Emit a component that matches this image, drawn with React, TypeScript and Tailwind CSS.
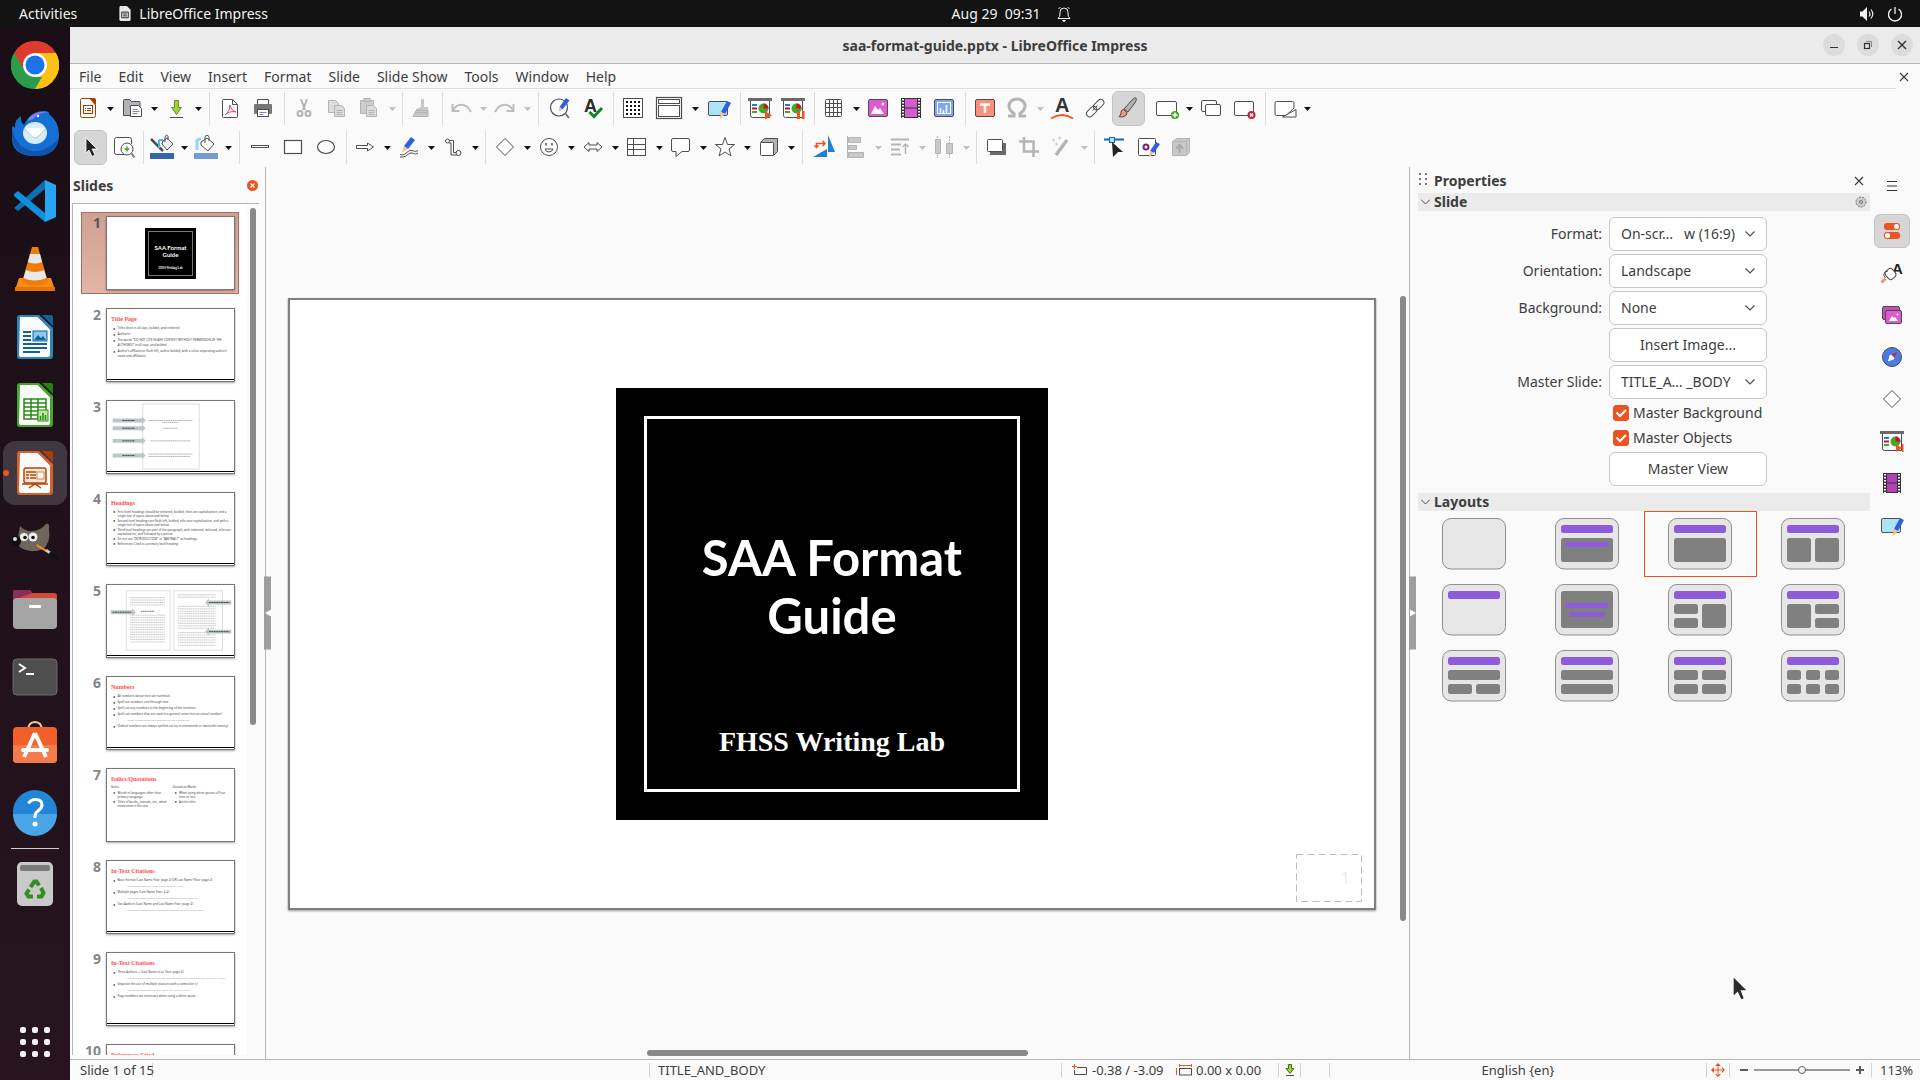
import React, { ReactNode, useState } from "react";

/* ------------------------------------------------------------------ */
/* Shared pieces                                                       */
/* ------------------------------------------------------------------ */

const Svg = ({ children, size = "size-6", box = "0 0 24 24" }: { children: ReactNode; size?: string; box?: string }) => (
  <svg className={`${size} shrink-0 overflow-visible`} viewBox={box} fill="none" stroke="#4d4d4d" strokeWidth="1" aria-hidden="true">
    {children}
  </svg>
);

const Pencil = () => (
  <g stroke="none">
    <path d="M20 5l4 2-6 11-4-2z" fill="#2f5fde" />
    <path d="M14 16l4 2-4.500 4.500-1 .5z" fill="#f7c08a" />
  </g>
);

const Screen = ({ children }: { children: ReactNode }) => (
  <Svg>
    <path d="M2.500 4v15.500q0 2 2 2H21.500V4" fill="#fff" />
    <rect x="0" y="2" width="24" height="3" fill="#6a6a6a" stroke="none" />
    <g stroke="none">
      <rect x="4" y="8" width="5" height="2" fill="#1e7fd6" />
      <rect x="4" y="11.500" width="5" height="2" fill="#c8102e" />
      <rect x="4" y="15" width="5" height="2" fill="#43a828" />
      <circle cx="15.500" cy="12.500" r="5" fill="#43a828" />
      <path d="M15.500 12.500V7.500a5 5 0 0 1 5 5z" fill="#c8102e" />
      {children}
    </g>
  </Svg>
);

const G = "#c9c9c9";
const GS = "#b4b4b4";

const ic = {
  newDoc: (
    <Svg>
      <path d="M5.500 2.500h9l5 5v12q0 2-2 2h-11q-2 0-2-2v-15q0-2 1-2z" fill="#fff" stroke="#a33e03" />
      <path d="M13 2h5q2 0 2 2v6z" fill="#a33e03" stroke="none" />
      <rect x="7.500" y="9.500" width="9" height="8" stroke="#a33e03" />
      <path d="M9 12.500h1m1 0h4M9 14.500h1m1 0h4" stroke="#a33e03" />
    </Svg>
  ),
  open: (
    <Svg>
      <path d="M3.500 19.500v-15q0-1 1-1h5l2 2h7.500q1 0 1 1v13z" fill="#b3b3b3" />
      <path d="M10.500 9.500h8l3 3v8h-11z" fill="#fff" />
      <path d="M12.500 13.500h5m-5 2h7m-7 2h5" stroke="#7b7be0" />
    </Svg>
  ),
  save: (
    <Svg>
      <path d="M10.500 4.500h4v7h3l-5 7-5-7h3z" fill="#9bd237" stroke="#6b8f2b" />
      <path d="M6 21.500h13" />
    </Svg>
  ),
  pdf: (
    <Svg>
      <path d="M5.500 3.500h9l5 5v12q0 1-1 1h-13q-1 0-1-1v-16q0-1 1-1z" fill="#fff" />
      <path d="M14.500 3.500v5h5" />
      <path d="M12 9c1 4 3 6 6 7-4-1-8 0-11 3 3-2 5-6 5-10z" stroke="#ed3d55" />
    </Svg>
  ),
  print: (
    <Svg>
      <path d="M6.500 8V3.500h11V8" fill="#fff" />
      <rect x="3" y="8" width="18" height="10" rx="1" fill="#777" stroke="none" />
      <rect x="6.500" y="13.500" width="11" height="7" fill="#fff" />
      <path d="M8.500 16.500h7m-7 2h4" stroke="#7b7be0" />
    </Svg>
  ),
  cut: (
    <Svg>
      <path d="M9 3l4 11M15 3l-4 11" stroke={GS} strokeWidth="2" />
      <circle cx="8" cy="17.500" r="2.500" stroke={GS} strokeWidth="2" />
      <circle cx="16" cy="17.500" r="2.500" stroke={GS} strokeWidth="2" />
    </Svg>
  ),
  copy: (
    <Svg>
      <path d="M3.500 4.500h7l3 3v9h-10z" fill="#dcdcdc" stroke={GS} />
      <path d="M9.500 9.500h7l3 3v8h-10z" fill="#dcdcdc" stroke={GS} />
      <path d="M11.500 14.500h6m-6 2h6m-6 2h6" stroke={GS} />
    </Svg>
  ),
  paste: (
    <Svg>
      <path d="M2.500 4.500h13v13h-13z" fill="#cecece" stroke={GS} />
      <rect x="6" y="2.500" width="6" height="3" fill={G} stroke={GS} />
      <path d="M8.500 9.500h7l3 3v8h-10z" fill="#dcdcdc" stroke={GS} />
      <path d="M10.500 14.500h6m-6 2h6m-6 2h6" stroke={GS} />
    </Svg>
  ),
  clone: (
    <Svg>
      <path d="M11 3h3v8h4v5H6v-3l5-2z" fill={G} stroke="none" />
      <path d="M6 14.500h12v6H3z" fill={G} stroke={GS} />
      <path d="M5 16.500h13" stroke={GS} />
    </Svg>
  ),
  undo: (
    <Svg>
      <path d="M3.500 8v7h7M3.500 14.500C8 7 17 6 22 16" stroke="#bdbdbd" strokeWidth="2" />
    </Svg>
  ),
  redo: (
    <Svg>
      <path d="M20.500 8v7h-7M20.500 14.500C16 7 7 6 2 16" stroke="#bdbdbd" strokeWidth="2" />
    </Svg>
  ),
  find: (
    <Svg>
      <circle cx="12" cy="11.500" r="8.500" fill="#fff" strokeWidth="1.200" />
      <path d="M18 17l4 5" stroke="#777" strokeWidth="2" />
      <path d="M19 2l3.500 2.500-7 9-3-2.500z" fill="#2f5fde" stroke="none" />
      <path d="M12.500 11l3 2.500-4 2z" fill="#f7c08a" stroke="none" />
    </Svg>
  ),
  spell: (
    <Svg>
      <text x="4" y="16" fontSize="18" fontWeight="700" fontFamily="Liberation Sans, sans-serif" fill="#2b2b2b" stroke="none">A</text>
      <path d="M9.500 16l4.500 4.500 8-8.500" stroke="#17822c" strokeWidth="3" />
    </Svg>
  ),
  grid: (
    <Svg>
      <rect x="2.500" y="2.500" width="19" height="19" fill="#fff" />
      {[6, 10, 14, 18].map((y) => (
        <path key={y} d={`M5 ${y}h14`} stroke="#111" strokeWidth="2" strokeDasharray="2 2" />
      ))}
    </Svg>
  ),
  views: (
    <Svg size="h-6 w-[26px]" box="0 0 26 24">
      <rect x=".5" y="1.500" width="25" height="21" fill="#fff" strokeWidth="1.200" />
      <rect x="2.500" y="3.500" width="21" height="4" fill="#fff" />
      <rect x="2.500" y="9.500" width="21" height="11" fill="#fff" />
    </Svg>
  ),
  master: (
    <Svg>
      <rect x="1.500" y="5.500" width="19" height="14" rx="1.500" fill="#aee3f7" />
      <Pencil />
    </Svg>
  ),
  startFirst: <Screen><path d="M17 15l7 4.500-7 4z" fill="#f0541e" /></Screen>,
  startCurrent: <Screen><path d="M16 15h3v8h-3zM21 15h2.500v8H21z" fill="#f0541e" /></Screen>,
  startNext: <Screen><path d="M16 15l6 4-6 4zM22 15h1.500v8H22z" fill="#f0541e" /></Screen>,
  table: (
    <Svg>
      <rect x="3.500" y="3.500" width="16" height="17" rx="1" fill="#fff" />
      <path d="M4 7.500h15M4 11.500h15M4 16.500h15M7.500 4v16M11.500 4v16M15.500 4v16" />
    </Svg>
  ),
  image: (
    <Svg>
      <rect x="2.500" y="3.500" width="19" height="17" rx="1.500" fill="#dd5bcf" />
      <path d="M5 18l4-8 3 4 2-2 4 6z" fill="#fff" stroke="none" />
      <circle cx="17" cy="8" r="1.500" fill="#fff" stroke="none" />
    </Svg>
  ),
  film: (
    <Svg>
      <rect x="2" y="2" width="20" height="20" fill="#333" stroke="none" />
      <rect x="6" y="3" width="12" height="8.500" fill="#d55bd0" stroke="none" />
      <rect x="6" y="12.500" width="12" height="8.500" fill="#d55bd0" stroke="none" />
      <path d="M4 3v19M20 3v19" stroke="#fff" strokeWidth="2" strokeDasharray="1.500 1.500" />
    </Svg>
  ),
  filmDark: (
    <Svg>
      <rect x="3" y="2" width="18" height="20" fill="#333" stroke="none" />
      <rect x="7" y="3" width="10" height="8.500" fill="#b441b3" stroke="none" />
      <rect x="7" y="12.500" width="10" height="8.500" fill="#b441b3" stroke="none" />
      <path d="M5 3v19M19 3v19" stroke="#fff" strokeWidth="2" strokeDasharray="1.500 1.500" />
    </Svg>
  ),
  chart: (
    <Svg>
      <rect x="2.500" y="3.500" width="19" height="17" rx="1.500" fill="#7ea6f5" />
      <rect x="5.500" y="6.500" width="13" height="11" stroke="#fff" />
      <path d="M8.500 17v-5M11.500 17v-3M14.500 17V9" stroke="#fff" strokeWidth="1.500" />
    </Svg>
  ),
  textbox: (
    <Svg>
      <rect x="2.500" y="3.500" width="19" height="17" rx="1.500" fill="#fb8f7c" />
      <path d="M7 8.500h10M12 8v9" stroke="#fff" strokeWidth="2.500" />
    </Svg>
  ),
  omega: (
    <Svg>
      <path d="M2 20h6v-2.500C5 15.500 3 13 3 10c0-4 3.500-7 8-7s8 3 8 7c0 3-2 5.500-5 7.500V20h6" stroke={GS} strokeWidth="3" />
    </Svg>
  ),
  fontwork: (
    <Svg>
      <text x="5" y="16" fontSize="20" fontWeight="700" fontFamily="Liberation Sans, sans-serif" fill="#333" stroke="none">A</text>
      <path d="M1 22.500q11-7 22 0" stroke="#f0541e" strokeWidth="2" />
    </Svg>
  ),
  link: (
    <Svg>
      <rect x="9.500" y="5.500" width="12" height="6.500" rx="3.200" transform="rotate(-45 15.500 8.500)" />
      <rect x="2.500" y="12.500" width="12" height="6.500" rx="3.200" transform="rotate(-45 8.500 15.500)" />
      <path d="M9.500 14.500l5-5" />
    </Svg>
  ),
  brush: (
    <Svg>
      <path d="M20 2q1 1-.5 4L12 16l-4-3 8-9q3-3 4-2z" fill="#b3b3b3" />
      <path d="M7.500 13.500l3.500 3q0 3-3 4-2 1-5 0 2-1 2-4t2.500-3z" fill="#fb8f7c" />
    </Svg>
  ),
  newSlide: (
    <Svg>
      <rect x="1.500" y="5.500" width="20" height="14" rx="1.500" fill="#fff" />
      <circle cx="20" cy="19" r="4" fill="#43a828" stroke="none" />
      <path d="M17.500 19h5M20 16.500v5" stroke="#fff" strokeWidth="1.500" />
    </Svg>
  ),
  dupSlide: (
    <Svg>
      <rect x="2.500" y="4.500" width="15" height="11" rx="1.500" fill="#fff" />
      <rect x="6.500" y="8.500" width="15" height="11" rx="1.500" fill="#fff" />
    </Svg>
  ),
  delSlide: (
    <Svg>
      <rect x="2.500" y="5.500" width="19" height="14" rx="1.500" fill="#fff" />
      <circle cx="19.500" cy="19" r="4" fill="#c8243c" stroke="none" />
      <path d="M18 17.500l3 3m0-3l-3 3" stroke="#fff" strokeWidth="1.500" />
    </Svg>
  ),
  layout: (
    <Svg>
      <path d="M3.500 5.500h16q1.500 0 1.500 1.500v5l-8 7.500H3.500q-1.500 0-1.500-1.500V7q0-1.500 1.500-1.500z" fill="#fff" />
      <path d="M23 13.500v7.500H9.500z" fill="#fff" />
    </Svg>
  ),
  pointer: (
    <Svg>
      <path d="M8 3l11 11h-5l3 6-3 1.500-3-6.500-3 3z" fill="#222" stroke="#fff" strokeWidth=".8" />
    </Svg>
  ),
  zoom: (
    <Svg>
      <path d="M16 19.500H5.500q-2 0-2-2v-13q0-2 2-2h13q2 0 2 2V9" fill="#fff" />
      <circle cx="16" cy="14" r="6" fill="#fff" />
      <path d="M13.500 14h5M16 11.500v5" stroke="#43a828" strokeWidth="1.500" />
      <path d="M20.500 18.500l3 4" stroke="#777" strokeWidth="2" />
    </Svg>
  ),
  lineColor: (
    <Svg>
      <path d="M1 4l12 12" strokeWidth="2.500" />
      <path d="M9 5v8M9 5h4" stroke="#58b5d8" strokeWidth="2" />
      <path d="M13 6l4-3 6 6-6 6-5-6zM15 7V1.500q2-3 3 0V5" fill="#eee" />
      <rect x="0" y="18" width="24" height="6" fill="#3465a4" stroke="none" />
    </Svg>
  ),
  fillColor: (
    <Svg>
      <path d="M3 15V6q0-2 4-2" stroke="#8ed8f5" strokeWidth="3" />
      <path d="M7 7l6-4 7 6-6 7-7-6zM11 8V1.500q2-3 4 0V6" fill="#fff" />
      <rect x="0" y="18" width="24" height="6" fill="#729fcf" stroke="none" />
    </Svg>
  ),
  line: <Svg><rect x="3.500" y="10.500" width="17" height="2" fill="#fff" /></Svg>,
  rect: <Svg><rect x="3.500" y="5.500" width="17" height="13" fill="#fff" strokeWidth="1.200" /></Svg>,
  ellipse: <Svg><ellipse cx="12" cy="12" rx="8.500" ry="6.500" fill="#fff" strokeWidth="1.200" /></Svg>,
  arrow: <Svg><path d="M3.500 10.500h11v-2.500l6 4-6 4v-2.500h-11z" fill="#fff" /></Svg>,
  curve: (
    <Svg>
      <path d="M14 2l4 3-7 9-4-3z" fill="#2f5fde" stroke="none" />
      <path d="M7 11l4 3-6 3z" fill="#f7c08a" stroke="none" />
      <path d="M3 19.500c5 2 7-4 11-4 3 0 4 2 7 0M3 22c6 1 8-4 11-4 3 0 4 2 7 0" />
    </Svg>
  ),
  connector: (
    <Svg>
      <path d="M8 5.500h4.500v12H16M8 8h2v12h6" />
      <circle cx="6.500" cy="6" r="2" fill="#fff" />
      <circle cx="17.500" cy="18" r="2.500" fill="#fff" />
    </Svg>
  ),
  diamond: <Svg><path d="M12 3.500l8.500 8.500-8.500 8.500-8.500-8.500z" fill="#fff" /></Svg>,
  smiley: (
    <Svg>
      <circle cx="12" cy="12" r="8.500" fill="#fff" />
      <path d="M9 8v2.500M15 8v2.500" strokeWidth="1.500" />
      <path d="M8 14h8q-1 3-4 3t-4-3z" />
    </Svg>
  ),
  blockArrow: <Svg><path d="M3 12l5-4.500v2.500h8V7.500l5 4.500-5 4.500V14H8v2.500z" fill="#fff" /></Svg>,
  flow: (
    <Svg>
      <rect x="2.500" y="3.500" width="18" height="17" fill="#fff" />
      <path d="M2.500 9.500h18M2.500 14.500h18M8.500 3.500v17" />
    </Svg>
  ),
  callout: <Svg><path d="M4 3.500h15q1.500 0 1.500 1.500v10q0 1.500-1.500 1.500h-6l-6 5v-5H4q-1.500 0-1.500-1.500V5q0-1.500 1.500-1.500z" fill="#fff" /></Svg>,
  star: <Svg><path d="M12 2.500l2.500 7h7l-5.500 4.500 2 7-6-4-6 4 2-7-5.500-4.500h7z" fill="#fff" /></Svg>,
  cube: (
    <Svg>
      <path d="M3.500 7.500l4-4h13v13l-4 4z" fill="#b3b3b3" />
      <rect x="3.500" y="7.500" width="13" height="13" rx="1" fill="#fff" />
    </Svg>
  ),
  rotate: (
    <Svg>
      <path d="M17 0v17h7zM2 22h14v-8z" fill="#1e7fd6" stroke="none" />
      <path d="M5.500 12V8.500h8M3.500 10.500l2 2 2-2M11.500 6l2.500 2.500-2.500 2.500" stroke="#f0541e" strokeWidth="1.500" />
    </Svg>
  ),
  align: (
    <Svg>
      <path d="M3.500 1v22" stroke={GS} />
      <g fill={G} stroke={GS}><path d="M4.500 2.500h12v5h-12zM4.500 10.500h8v4h-8zM4.500 17.500h15v5h-15z" /></g>
    </Svg>
  ),
  arrange: (
    <Svg>
      <path d="M3 4.500h18M3 9.500h10M3 14.500h9M3 19.500h10" stroke={GS} strokeWidth="2" />
      <path d="M17.500 19V9M14.500 12l3-3 3 3" stroke={GS} strokeWidth="1.500" />
    </Svg>
  ),
  distribute: (
    <Svg>
      <path d="M5.500 1v22M17.500 1v22" stroke={GS} strokeDasharray="2 1" />
      <path d="M3.500 4.500h5v14h-5zM14.500 8.500h6v10h-6z" fill={G} stroke={GS} />
    </Svg>
  ),
  shadow: (
    <Svg>
      <rect x="6" y="8" width="16" height="12" fill="#6a6a6a" stroke="none" />
      <rect x="3.500" y="4.500" width="15" height="12" rx="1" fill="#fff" />
    </Svg>
  ),
  crop: <Svg><path d="M7 2v14.500h15M2 6.500h14.500V22" stroke={GS} strokeWidth="2.500" /></Svg>,
  wand: (
    <Svg>
      <path d="M17 5L6 20" stroke={GS} strokeWidth="3.500" />
      <path d="M2 5h3M3.500 3.500v3M8 3h3M9.500 1.500v3M5 9h3M6.500 7.500v3" stroke={G} />
    </Svg>
  ),
  points: (
    <Svg>
      <path d="M2 4.500h20" stroke="#1566a8" strokeWidth="2" />
      <rect x="7.500" y="2.500" width="5" height="5" fill="#aee3f7" stroke="#1566a8" />
      <path d="M10 7l11 10h-5l-5 5z" fill="#222" stroke="none" />
    </Svg>
  ),
  glue: (
    <Svg>
      <rect x="3.500" y="3.500" width="17" height="17" rx="1" fill="#fff" />
      <circle cx="11" cy="12" r="2.500" stroke="#7b2276" strokeWidth="2" />
      <path d="M21 7l4 2-6 9-4-2z" fill="#2f5fde" stroke="none" />
      <path d="M15 16l4 2-5 4z" fill="#f7c08a" stroke="none" />
    </Svg>
  ),
  extrude: (
    <Svg>
      <path d="M4.500 6.500l4-3h13v14l-3 3h-14z" fill={G} stroke={GS} />
      <path d="M4.500 6.500h14v14M18.500 6.500l3-3" stroke={GS} />
      <path d="M11.500 18v-7M8 13.500l3.500-3.500 3.500 3.500" stroke="#a9a9a9" strokeWidth="2" />
    </Svg>
  ),
  menu: <Svg><path d="M7 7.500h10M7 12h10M7 16.500h10" stroke="#333" strokeWidth="1.200" /></Svg>,
  props: (
    <Svg>
      <g stroke="none">
        <rect x="4" y="4" width="16" height="7" rx="3" fill="#e95420" />
        <rect x="4" y="13" width="16" height="7" rx="3" fill="#e95420" />
        <circle cx="16.500" cy="7.500" r="2.500" fill="#fff" />
        <circle cx="7.500" cy="16.500" r="2.500" fill="#fff" />
      </g>
    </Svg>
  ),
  styles: (
    <Svg>
      <text x="12" y="13" fontSize="15" fontWeight="700" fontFamily="Liberation Sans, sans-serif" fill="#222" stroke="none">A</text>
      <rect x="6" y="8" width="9" height="10" rx="3" fill="#fff" transform="rotate(-40 10.500 13)" />
      <path d="M8 10q-5 1-4 5l1.500 2" />
      <path d="M1.500 21.500l4-4" stroke="#fb8f7c" strokeWidth="3" />
    </Svg>
  ),
  gallery: (
    <Svg>
      <rect x="2.500" y="3.500" width="17" height="13" rx="1.500" fill="#c84dbd" />
      <rect x="5.500" y="7.500" width="16" height="13" rx="1.500" fill="#dd5bcf" />
      <path d="M9 18l3-5 2 2 1-1 3 4z" fill="#fff" stroke="none" />
      <circle cx="17.500" cy="11.500" r="1" fill="#fff" stroke="none" />
    </Svg>
  ),
  compass: (
    <Svg>
      <circle cx="12" cy="12" r="9.500" fill="#4a7ce8" />
      <path d="M8 16.500l1.500-6 1.500-1 3.500 3.500-1 1.500z" fill="#fff" stroke="none" />
      <path d="M17 7l-5.500 2.500 3 3z" fill="#d8263c" stroke="none" />
    </Svg>
  ),
};

/* ------------------------------------------------------------------ */
/* Toolbars                                                            */
/* ------------------------------------------------------------------ */

type Tool = { label: string; icon: ReactNode; menu?: "on" | "off" | "wide"; pressed?: boolean; roomy?: boolean } | { gap: "s" | "m" | "l"; blank?: boolean };

const row1: Tool[] = [
  { label: "New", icon: ic.newDoc, menu: "on" },
  { label: "Open", icon: ic.open, menu: "on" },
  { label: "Save", icon: ic.save, menu: "on" },
  { gap: "l" },
  { label: "Export as PDF", icon: ic.pdf },
  { label: "Print", icon: ic.print },
  { gap: "m" },
  { label: "Cut", icon: ic.cut },
  { label: "Copy", icon: ic.copy },
  { label: "Paste", icon: ic.paste, menu: "off" },
  { gap: "m" },
  { label: "Clone Formatting", icon: ic.clone },
  { gap: "s" },
  { label: "Undo", icon: ic.undo, menu: "off" },
  { label: "Redo", icon: ic.redo, menu: "off" },
  { gap: "l" },
  { label: "Find and Replace", icon: ic.find },
  { label: "Spelling", icon: ic.spell },
  { gap: "m" },
  { label: "Display Grid", icon: ic.grid },
  { label: "Display Views", icon: ic.views, menu: "wide", roomy: true },
  { label: "Master Slide", icon: ic.master },
  { gap: "m" },
  { label: "Start from First Slide", icon: ic.startFirst },
  { label: "Start from Current Slide", icon: ic.startCurrent },
  { gap: "m" },
  { label: "Table", icon: ic.table, menu: "on" },
  { label: "Insert Image", icon: ic.image },
  { label: "Insert Media", icon: ic.film },
  { label: "Insert Chart", icon: ic.chart },
  { gap: "m" },
  { label: "Insert Text Box", icon: ic.textbox },
  { label: "Special Character", icon: ic.omega, menu: "off" },
  { label: "Fontwork", icon: ic.fontwork },
  { label: "Hyperlink", icon: ic.link },
  { label: "Show Draw Functions", icon: ic.brush, pressed: true },
  { gap: "s", blank: true },
  { label: "New Slide", icon: ic.newSlide, menu: "on" },
  { label: "Duplicate Slide", icon: ic.dupSlide },
  { label: "Delete Slide", icon: ic.delSlide },
  { gap: "m" },
  { label: "Slide Layout", icon: ic.layout, menu: "on" },
];

const row2: Tool[] = [
  { label: "Select", icon: ic.pointer, pressed: true },
  { label: "Zoom & Pan", icon: ic.zoom },
  { gap: "s" },
  { label: "Line Color", icon: ic.lineColor, menu: "on" },
  { label: "Fill Color", icon: ic.fillColor, menu: "on" },
  { gap: "l" },
  { label: "Line", icon: ic.line },
  { label: "Rectangle", icon: ic.rect },
  { label: "Ellipse", icon: ic.ellipse },
  { gap: "s" },
  { label: "Lines and Arrows", icon: ic.arrow, menu: "on" },
  { label: "Curves and Polygons", icon: ic.curve, menu: "on" },
  { label: "Connectors", icon: ic.connector, menu: "on" },
  { gap: "m" },
  { label: "Basic Shapes", icon: ic.diamond, menu: "on" },
  { label: "Symbol Shapes", icon: ic.smiley, menu: "on" },
  { label: "Block Arrows", icon: ic.blockArrow, menu: "on" },
  { label: "Flowchart", icon: ic.flow, menu: "on" },
  { label: "Callouts", icon: ic.callout, menu: "on" },
  { label: "Stars and Banners", icon: ic.star, menu: "on" },
  { label: "3D Objects", icon: ic.cube, menu: "on" },
  { gap: "l" },
  { label: "Rotate", icon: ic.rotate },
  { label: "Align Objects", icon: ic.align, menu: "off" },
  { label: "Arrange", icon: ic.arrange, menu: "off" },
  { label: "Distribute", icon: ic.distribute, menu: "off" },
  { gap: "m" },
  { label: "Shadow", icon: ic.shadow },
  { label: "Crop Image", icon: ic.crop },
  { label: "Filter", icon: ic.wand, menu: "off" },
  { gap: "m" },
  { label: "Edit Points", icon: ic.points },
  { label: "Show Gluepoints", icon: ic.glue },
  { label: "Toggle Extrusion", icon: ic.extrude },
];

const gapWidth = { s: "w-1.5", m: "w-2", l: "w-2.5" };

const Toolbar = ({ tools, name, pad }: { tools: Tool[]; name: string; pad: string }) => (
  <div role="toolbar" aria-label={name} className={`flex h-[39px] items-center ${pad}`}>
    {tools.map((t, n) =>
      "gap" in t ? (
        <span key={n} className={`flex h-[33px] shrink-0 justify-center ${gapWidth[t.gap]}`}>
          {!t.blank && <span className="w-px bg-[#dcdcdc]" />}
        </span>
      ) : (
        <React.Fragment key={n}>
          <button
            aria-label={t.label}
            className={`flex h-[35px] shrink-0 items-center justify-center rounded-md border pb-px ${t.roomy ? "w-[38px]" : "w-[33px] pr-px"} ${t.pressed ? "border-[#c4c4c4] bg-[#d6d6d6]" : "border-transparent"}`}
          >
            {t.icon}
          </button>
          {t.menu && (
            <button aria-label={`${t.label} options`} className={`flex h-[35px] shrink-0 items-center justify-center pt-px ${t.menu === "wide" ? "w-[15px]" : "w-[11px]"}`}>
              <svg className={`h-1 w-[7px] ${t.menu === "off" ? "fill-[#c0c0c0]" : "fill-[#111]"}`} viewBox="0 0 7 4" aria-hidden="true">
                <path d="M0 0h7L3.500 4z" />
              </svg>
            </button>
          )}
        </React.Fragment>
      ),
    )}
  </div>
);

/* ------------------------------------------------------------------ */
/* Desktop: top bar and dock                                           */
/* ------------------------------------------------------------------ */

const TopBar = () => (
  <header className="grid h-[27px] grid-cols-[1fr_auto_1fr] items-center bg-[#131313] text-[14px] leading-5 text-[#f2f2f2]">
    <div className="flex items-center pl-[19px]">
      <button>Activities</button>
      <button className="ml-[41px] flex items-center gap-[7px]">
        <svg className="h-[15px] w-3.5" viewBox="0 0 14 16" aria-hidden="true">
          <path d="M2 0h7l4 4v10q0 2-2 2H3q-2 0-2-2V2q0-2 1-2z" fill="#e6e6e6" />
          <path d="M3.500 6.500h7v6h-7zM5 8.500h4M5 10.500h4" fill="none" stroke="#222" />
        </svg>
        LibreOffice Impress
      </button>
    </div>
    <button className="flex items-center gap-4 pl-[104px]">
      <span className="whitespace-pre">Aug 29  09:31</span>
      <svg className="h-4 w-4" viewBox="0 0 16 16" fill="none" stroke="#f2f2f2" aria-hidden="true">
        <path d="M2 12.500q2-1.500 2-4.500V6q0-4 4-4t4 4v2q0 3 2 4.500zM2.500 3l2-2M13.500 3l-2-2" />
        <path d="M6.500 14.500h3L8 15.500z" fill="#f2f2f2" />
      </svg>
    </button>
    <button aria-label="System menu" className="flex items-center gap-3 justify-self-end pr-[17px]">
      <svg className="h-4 w-4" viewBox="0 0 16 16" fill="none" stroke="#f2f2f2" aria-hidden="true">
        <path d="M1 5.500h2.500L8 1v14l-4.500-4.500H1z" fill="#f2f2f2" stroke="none" />
        <path d="M10 5.500q2 2.500 0 5M12 3.500q3.500 4.500 0 9" strokeWidth="1.200" />
      </svg>
      <svg className="h-4 w-4" viewBox="0 0 16 16" fill="none" stroke="#f2f2f2" strokeWidth="1.300" aria-hidden="true">
        <path d="M4.500 3a6.500 6.500 0 1 0 7 0M8 1v7" />
      </svg>
    </button>
  </header>
);

const OfficeIcon = ({ edge, deep, children }: { edge: string; deep: string; children: ReactNode }) => (
  <>
    <path d="M9 2h19l14 13v28q0 3-3 3H9q-3 0-3-3V5q0-3 3-3z" fill={edge} />
    <path d="M9 4h17.500L39 16.500V42q0 2-2 2H10q-2 0-2-2z" fill="#fbfbfb" />
    <path d="M31 2h9q2 0 2 2v9z" fill={deep} />
    {children}
  </>
);

const dock: { name: string; art: ReactNode; active?: boolean }[] = [
  {
    name: "Google Chrome",
    art: (
      <>
        <path d="M24 24L3.200 12A24 24 0 0 1 44.800 12z" fill="#dd3b2e" />
        <path d="M24 24l20.800-12A24 24 0 0 1 24 48z" fill="#fbc116" />
        <path d="M24 24v24A24 24 0 0 1 3.200 12z" fill="#2a9c4b" />
        <path d="M24 12h20.800A24 24 0 0 1 24 48l10.400-18z" fill="#fbc116" />
        <path d="M3.200 12A24 24 0 0 1 44.800 12H24L13.600 30z" fill="#dd3b2e" />
        <path d="M3.200 12l10.400 18q4 6 10.400 6h7L24 48A24 24 0 0 1 3.200 12z" fill="#2a9c4b" />
        <circle cx="24" cy="24" r="12" fill="#fff" />
        <circle cx="24" cy="24" r="9.500" fill="#1a73e8" />
      </>
    ),
  },
  {
    name: "Thunderbird",
    art: (
      <>
        <path d="M1 18q1-2 3 1-1-8 6-12-1 6 3 9Q20 1 34 2q5 1 4 3 10 8 10 20 0 22-24 22T1 27z" fill="#1570d6" />
        <path d="M1 18q3 20 20 24 14 2 26-12-2 17-23 17T1 27z" fill="#0f55b0" />
        <path d="M16 12Q22 1 38 3 26 4 22 10z" fill="#8a7cf0" />
        <circle cx="27" cy="7" r="1.200" fill="#fff" />
        <ellipse cx="24" cy="24" rx="12" ry="11" fill="#d8ebfb" />
        <path d="M13 19q8 10 11 10t11-10" fill="#fff" stroke="#9cc4ea" />
      </>
    ),
  },
  {
    name: "Visual Studio Code",
    art: (
      <>
        <path d="M3 31l4 3 27-22V3z" fill="#0b6fb4" />
        <path d="M3 17l4-3 27 22v9L3 19z" fill="#0f8fdc" />
        <path d="M34 3l11 5v32l-11 5z" fill="#28a4f2" />
      </>
    ),
  },
  {
    name: "VLC media player",
    art: (
      <>
        <path d="M8 33h32l4 12H4z" fill="#f78b15" />
        <path d="M4 42h40v4H4z" fill="#e57308" />
        <path d="M21 2h6l10 35q-13 7-26 0z" fill="#ef7d0c" />
        <path d="M19 9h10l2 8q-7 3-14 0zM15 25q9 4 18 0l2.500 8q-12 5-23 0z" fill="#e8e8e8" />
      </>
    ),
  },
  {
    name: "LibreOffice Writer",
    art: (
      <OfficeIcon edge="#2b86bd" deep="#11639b">
        <path d="M12 19h8M12 23h8M12 27h8M12 31h24M12 35h24M12 39h17" stroke="#11639b" strokeWidth="1.800" />
        <rect x="22" y="18" width="14" height="10" fill="#8cc8ea" stroke="#11639b" />
        <path d="M23 27l4-5 3 3 2-2 3 4z" fill="#11639b" />
      </OfficeIcon>
    ),
  },
  {
    name: "LibreOffice Calc",
    art: (
      <OfficeIcon edge="#43a829" deep="#2a7d13">
        <path d="M13 18h22v20H13zM13 22h22M13 26h22M13 30h22M13 34h22M20 18v20M27 18v20" fill="none" stroke="#2a8a14" strokeWidth="1.500" />
        <rect x="27" y="29" width="10" height="11" fill="#b9ea9f" stroke="#2a8a14" />
        <path d="M29.500 39v-4M32 39v-7M34.500 39v-5" stroke="#2a8a14" strokeWidth="1.500" />
      </OfficeIcon>
    ),
  },
  {
    name: "LibreOffice Impress",
    active: true,
    art: (
      <OfficeIcon edge="#d0622a" deep="#a83f08">
        <rect x="13" y="19" width="22" height="15" rx="2" fill="#fbe6da" stroke="#b0480f" strokeWidth="1.500" />
        <path d="M15 23h10M15 26h3m1 0h6M15 29h3m1 0h6" stroke="#b0480f" strokeWidth="1.500" />
        <rect x="26" y="23" width="7" height="7" fill="#fff" stroke="#e07b45" />
        <path d="M18 39l6-4 6 4M11 35h26" stroke="#b0480f" strokeWidth="1.500" fill="none" />
      </OfficeIcon>
    ),
  },
  {
    name: "GIMP",
    art: (
      <>
        <path d="M9 9q5 6 13 5t13-7q4-1 3 5 2 14-6 20-12 5-22-1-5-4-3-10z" fill="#6e665a" />
        <ellipse cx="5" cy="24" rx="5" ry="5.500" fill="#111" />
        <ellipse cx="4" cy="22" rx="2" ry="2" fill="#ddd" />
        <circle cx="13" cy="20" r="4" fill="#eee" />
        <circle cx="22" cy="20" r="4.500" fill="#eee" />
        <circle cx="14" cy="20.500" r="1.800" fill="#111" />
        <circle cx="22" cy="20.500" r="1.800" fill="#111" />
        <path d="M26 27l10 6-1 2-10-6z" fill="#e88a1c" />
        <path d="M36 32l4 3-2 2-4-3z" fill="#ccc" />
        <path d="M39 35q7 1 9 8-8-1-10-6z" fill="#111" />
      </>
    ),
  },
  {
    name: "Files",
    art: (
      <>
        <path d="M4 5h14q2 0 3 3h22q3 0 3 3v12H2V8q0-3 2-3z" fill="#d2483a" />
        <path d="M2 15V8q0-3 3-3h13l3 3z" fill="#84305a" />
        <rect x="2" y="13" width="44" height="31" rx="4" fill="#a5a5a5" />
        <rect x="18" y="20" width="12" height="3" rx="1" fill="#fff" />
      </>
    ),
  },
  {
    name: "Terminal",
    art: (
      <>
        <rect x="2" y="6" width="44" height="36" rx="4" fill="#4e4e4e" stroke="#6b6b6b" />
        <path d="M8 11l6 4-6 4M15 21h8" fill="none" stroke="#fff" strokeWidth="2" />
      </>
    ),
  },
  {
    name: "Ubuntu Software",
    art: (
      <>
        <path d="M17 10q0-9 7-9t7 9" fill="none" stroke="#f3c798" strokeWidth="2" />
        <rect x="2" y="6" width="44" height="36" rx="4" fill="#f1602a" />
        <path d="M2 24h44v14q0 4-4 4H6q-4 0-4-4z" fill="#f47c4a" />
        <path d="M24 12L13 36M24 12l11 24" stroke="#fff" strokeWidth="4" />
        <path d="M12 29h24" stroke="#fff" strokeWidth="4" strokeLinecap="round" />
      </>
    ),
  },
  {
    name: "Help",
    art: (
      <>
        <circle cx="24" cy="23" r="22" fill="#2185d8" />
        <path d="M2 25h44a22 22 0 0 1-44 0z" fill="#4aa5e6" />
        <path d="M17.500 14.500q2-4 7-4 6.500 0 6.500 5.500 0 3-3.500 5.500T24 27v2" fill="none" stroke="#fff" strokeWidth="3" />
        <circle cx="24" cy="35" r="2.500" fill="#fff" />
      </>
    ),
  },
];

const DockItem = ({ name, art, active }: { name: string; art: ReactNode; active?: boolean }) => (
  <button aria-label={name} className="relative flex h-[68px] w-full items-center justify-center">
    {active && <span className="absolute left-[3px] h-16 w-16 rounded-xl bg-[#403740]" />}
    {active && <span className="absolute left-[3px] size-1.5 rounded-full bg-[#e95420]" />}
    <svg className="relative size-12" viewBox="0 0 48 48" aria-hidden="true">{art}</svg>
  </button>
);

const Dock = () => (
  <nav aria-label="Dock" className="flex w-[70px] shrink-0 flex-col items-center bg-gradient-to-b from-[#190e16] to-[#27141f] pt-1">
    {dock.map((d) => (
      <DockItem key={d.name} {...d} />
    ))}
    <span className="my-px h-px w-12 bg-[#cfcfcf]" />
    <DockItem
      name="Trash"
      art={
        <>
          <rect x="6" y="2" width="36" height="44" rx="5" fill="#c9c9c9" />
          <rect x="9" y="5" width="30" height="6" rx="2" fill="#7a7a7a" />
          <g fill="none" stroke="#2f8f22" strokeWidth="4">
            <path d="M19.500 27l4-5.500h2l2.500 4" />
            <path d="M30 28l2.500 5-2 3.500H26" />
            <path d="M22 36.500h-4.500l-2-3 2.500-4" />
          </g>
        </>
      }
    />
    <button aria-label="Show Applications" className="mt-auto mb-[23px] grid grid-cols-3 gap-1.5">
      {Array.from({ length: 9 }, (_, n) => (
        <span key={n} className="size-1.5 rounded-xs bg-[#f2f2f2]" />
      ))}
    </button>
  </nav>
);

/* ------------------------------------------------------------------ */
/* Slide thumbnails                                                    */
/* ------------------------------------------------------------------ */

type Row = { t: string[]; sub?: boolean };
type Thumb = { title?: string; rows?: Row[]; tight?: boolean; art?: ReactNode; bar?: boolean };

const Bullets = ({ rows, tight }: { rows: Row[]; tight?: boolean }) => (
  <ul className={`flex flex-col gap-px whitespace-nowrap ${tight ? "leading-[4px]" : "leading-[5px]"}`}>
    {rows.map((r, n) => (
      <li key={n} className={`flex gap-0.5 ${r.sub ? "pl-[13px] text-[2px] text-[#999]" : "pl-0.5 text-[3px] text-[#444]"}`}>
        <span className={r.sub ? "" : "text-[4px]"}>{r.sub ? "○" : "●"}</span>
        <span>
          {r.t.map((l) => (
            <span key={l} className="block">{l}</span>
          ))}
        </span>
      </li>
    ))}
  </ul>
);

const arrowFill = "#bcc6c8";

const thumbs: Thumb[] = [
  {
    art: (
      <div className="flex h-full items-center justify-center">
        <div className="size-[51px] bg-black p-[3px]">
          <div className="flex h-full flex-col items-center justify-end gap-2 border border-[#777] pb-1 text-center font-['Lato',sans-serif] font-bold text-white">
            <p className="text-[6px] leading-[7px]">SAA Format<br />Guide</p>
            <p className="font-['Liberation_Serif',serif] text-[3px] leading-[5px] whitespace-nowrap">FHSS Writing Lab</p>
          </div>
        </div>
      </div>
    ),
  },
  {
    title: "Title Page",
    bar: true,
    rows: [
      { t: ["Titles short in all caps, bolded, and centered"] },
      { t: ["Author(s)"] },
      { t: ['The words “DO NOT CITE IN ANY CONTEXT WITHOUT PERMISSION OF THE', 'AUTHOR(S)” in all caps, and bolded'] },
      { t: ["Author’s affiliations: flush left, author bolded, with a colon separating authors’", "name and affiliation"] },
    ],
  },
  {
    bar: true,
    art: (
      <svg viewBox="0 0 127 72" className="h-full w-full" aria-hidden="true">
        <rect x="35" y="3" width="58" height="67" fill="none" stroke="#ddd" />
        {[20, 28, 41, 56].map((y) => (
          <g key={y}>
            <path d={`M4 ${y - 2}h30v-2l4 4-4 4v-2H4z`} fill={arrowFill} />
            <path d={`M14 ${y}h13`} stroke="#444" strokeDasharray="2 .5" />
          </g>
        ))}
        <g stroke="#999" strokeWidth=".8" strokeDasharray="1.500 .4">
          <path d="M41 20h45M55 22h17M56 28h15M43 41h41M41 54.500h45M41 57h43" />
        </g>
      </svg>
    ),
  },
  {
    title: "Headings",
    bar: true,
    tight: true,
    rows: [
      { t: ["First level headings should be centered, bolded, titles are capitalization, and a", "single line of space above and below"] },
      { t: ["Second level headings are flush left, bolded, title case capitalization, and with a", "single line of space above and below"] },
      { t: ["Third level headings are part of the paragraph, with indented, italicized, titles are", "capitalization, and followed by a period"] },
      { t: ["Do not use “INTRODUCTION” or “ABSTRACT” as headings"] },
      { t: ["References Cited is a primary level heading"] },
    ],
  },
  {
    bar: true,
    art: (
      <svg viewBox="0 0 127 72" className="h-full w-full" aria-hidden="true">
        <rect x="18" y="6" width="45" height="61" fill="none" stroke="#ddd" />
        <rect x="67" y="6" width="50" height="61" fill="none" stroke="#ddd" />
        <g stroke="#bbb" strokeDasharray="1.500 .4" strokeWidth=".8">
          {[13, 15.500, 18, 20.500, 31, 33.500, 36, 38.500, 41, 43.500, 46, 48.500, 51, 53.500, 56, 58.500].map((y) => (
            <path key={y} d={`M22 ${y}h36`} />
          ))}
          {[10, 12.500, 22, 24.500, 27, 29.500, 32, 34.500, 37, 39.500, 42, 44.500, 49, 51.500, 54, 56.500, 59, 62].map((y) => (
            <path key={y} d={`M71 ${y}h39`} />
          ))}
          <path d="M33 27h14" stroke="#444" />
        </g>
        <path d="M2 26h22v-2l4 4-4 4v-2H2zM126 16h-23v-2l-4 4 4 4v-2h23zM126 46h-23v-2l-4 4 4 4v-2h23z" fill={arrowFill} />
        <path d="M4 28h19M103 18h21M103 48h21" stroke="#444" strokeDasharray="2 .5" />
      </svg>
    ),
  },
  {
    title: "Numbers",
    bar: true,
    rows: [
      { t: ["All numbers above nine are numerals"] },
      { t: ["Spell out numbers one through nine"] },
      { t: ["Spell out any numbers at the beginning of the sentence"] },
      { t: ["Spell out numbers that are used in a general sense (not an actual number)"] },
      { t: ["“several hundred artifacts were recovered from the excavated site”"], sub: true },
      { t: ["Ordinal numbers are always spelled out (as in nineteenth or twentieth century)"] },
    ],
  },
  {
    art: (
      <div className="px-1 pt-1.5">
        <p className="font-['Liberation_Serif',serif] text-[6px] leading-2 font-bold text-[#ff4b4b]">Italics/Quotations</p>
        <div className="mt-px grid grid-cols-2 gap-1">
          <div>
            <p className="text-[3px] leading-[7px] text-[#444]">Italics</p>
            <Bullets tight rows={[{ t: ["Words in languages other than", "primary language"] }, { t: ["Titles of books, journals, etc., when", "mentioned in the text"] }]} />
          </div>
          <div>
            <p className="text-[3px] leading-[7px] text-[#444]">Quotation Marks</p>
            <Bullets tight rows={[{ t: ["When using direct quotes of four", "lines or less"] }, { t: ["Article titles"] }]} />
          </div>
        </div>
      </div>
    ),
  },
  {
    title: "In-Text Citations",
    bar: true,
    rows: [
      { t: ["Basic Format (Last Name Year: page #) OR Last Name (Year: page #)"] },
      { t: ["“Artifacts were recovered” (Smith 1998:24) or Smith (1998:24)"], sub: true },
      { t: ["Multiple pages (Last Name Year: #-#)"] },
      { t: ["“The ceramic assemblage was large and well preserved” (Smith 1998:24-26)"], sub: true },
      { t: ["Two Authors (Last Name and Last Name Year: page #)"] },
      { t: ["“The ceramic assemblage was large and well preserved” (Smith and Jones 1998:24)"], sub: true },
    ],
  },
  {
    title: "In-Text Citations",
    bar: true,
    rows: [
      { t: ["Three Authors + (Last Name et al. Year: page #)"] },
      { t: ["“The ceramic assemblage was large, well preserved and was found below the floor” (Smith et al. 1998:24)"], sub: true },
      { t: ["Separate the use of multiple citations with a semicolon (;)"] },
      { t: ["“The ceramic assemblage was large” (Jones 1999:12; Smith 1998:24)"], sub: true },
      { t: ["Page numbers are necessary when using a direct quote"] },
    ],
  },
  { title: "References Cited", bar: true, rows: [] },
];

const SlidesPanel = () => (
  <aside aria-label="Slides" className="relative flex w-[196px] shrink-0 flex-col border-r border-[#b5b5b5] pb-1">
    <div className="flex h-9 shrink-0 items-center justify-between pr-[7px] pl-[3px]">
      <h2 className="text-[14px] font-bold">Slides</h2>
      <button aria-label="Close pane">
        <svg className="size-[11px]" viewBox="0 0 11 11" aria-hidden="true">
          <circle cx="5.500" cy="5.500" r="5.500" fill="#e95420" />
          <path d="M3.500 3.500l4 4m0-4l-4 4" stroke="#fff" strokeWidth="1.200" />
        </svg>
      </button>
    </div>
    <div className="mr-1.5 ml-0.5 flex min-h-0 flex-1 border-t border-l border-[#b5b5b5] bg-white">
      <ol className="flex h-0 min-h-full flex-1 flex-col gap-2.5 overflow-hidden pt-2 pl-2">
        {thumbs.map((t, n) => (
          <li
            key={n}
            className={`flex h-[82px] w-[158px] shrink-0 border pt-[3px] ${n === 0 ? "border-[#a6705e] bg-gradient-to-b from-[#d0a092] to-[#e4b4a7]" : "border-transparent"}`}
          >
            <span className={`w-[19px] text-right text-[14px] leading-[14px] font-bold ${n === 0 ? "text-[#555]" : "text-[#858585]"}`}>{n + 1}</span>
            <div className="ml-[5px] flex h-[74px] w-[129px] flex-col border border-[#777] bg-white shadow-[0_1px_2px_rgba(0,0,0,0.35)]">
              <div className="min-h-0 flex-1 overflow-hidden">
                {t.art ?? (
                  <div className="px-1 pt-1.5">
                    <p className="mb-[3px] font-['Liberation_Serif',serif] text-[6px] leading-2 font-bold text-[#ff4b4b]">{t.title}</p>
                    <Bullets rows={t.rows ?? []} tight={t.tight} />
                  </div>
                )}
              </div>
              {t.bar && <div className="mb-px h-px shrink-0 bg-black" />}
            </div>
          </li>
        ))}
      </ol>
      <div className="w-3 bg-[#fafafa] pt-1 pl-[3px]">
        <div className="h-[61%] w-1.5 rounded-sm bg-[#898989]" />
      </div>
    </div>
  </aside>
);

/* ------------------------------------------------------------------ */
/* Canvas                                                              */
/* ------------------------------------------------------------------ */

const Grip = ({ dir }: { dir: "left" | "right" }) => (
  <button aria-label={dir === "left" ? "Hide slide pane" : "Hide sidebar"} className={`absolute top-1/2 z-10 flex h-[73px] w-[7px] -translate-y-1/2 items-center justify-center bg-[#9d9d9d] ${dir === "left" ? "-left-0.5" : "-right-[7px]"}`}>
    <svg className="h-[7px] w-1.5" viewBox="0 0 6 7" fill="#fff" aria-hidden="true">
      <path d={dir === "left" ? "M6 0v7L0 3.500z" : "M0 0v7l6-3.500z"} />
    </svg>
  </button>
);

const Canvas = () => (
  <main className="relative flex min-w-0 flex-1 flex-col border-r border-[#b5b5b5]">
    <Grip dir="left" />
    <Grip dir="right" />
    <div className="flex min-h-0 flex-1">
      <div className="flex min-w-0 flex-1 items-center justify-center pr-px pb-2">
        <article className="relative flex aspect-video w-[calc(100%-44px)] items-center justify-center border-2 border-[#808080] bg-white shadow-[0_1px_2px_rgba(0,0,0,0.4)]">
          <div className="aspect-square w-[39.9%] bg-black p-7">
            <div className="flex h-full flex-col items-center justify-end gap-[82px] border-3 border-white pb-[31px] text-center font-bold text-white">
              <h1 className="font-['Lato',sans-serif] text-[49px] leading-[58px]">
                SAA Format
                <br />
                Guide
              </h1>
              <p className="font-['Liberation_Serif',serif] text-[28px] leading-8 whitespace-nowrap">FHSS Writing Lab</p>
            </div>
          </div>
          <div className="absolute right-3 bottom-1.5 flex h-12 w-[66px] items-center justify-end pr-3 text-[16px] text-[#ededed]">
            <svg className="absolute inset-0 h-full w-full" fill="none" stroke="#bdbdbd" strokeDasharray="7 4" aria-hidden="true">
              <rect x=".5" y=".5" width="65" height="47" />
            </svg>
            1
          </div>
        </article>
      </div>
      <div className="w-[10px] pt-[129px] pl-px">
        <div className="h-[83%] w-1.5 rounded-sm bg-[#898989]" />
      </div>
    </div>
    <div className="flex h-2.5 justify-center pt-px">
      <div className="h-1.5 w-1/3 rounded-sm bg-[#898989]" />
    </div>
  </main>
);

/* ------------------------------------------------------------------ */
/* Sidebar                                                             */
/* ------------------------------------------------------------------ */

const SectionHead = ({ title, gear }: { title: string; gear?: boolean }) => (
  <div className="flex h-[18px] items-center bg-[#ebebeb] pr-[3px] pl-[3px]">
    <button className="flex items-center gap-1 text-[14px] leading-[18px] font-bold">
      <svg className="h-1.5 w-[9px]" viewBox="0 0 9 6" fill="none" stroke="#4d4d4d" aria-hidden="true">
        <path d="M0 .5l4.500 4.500L9 .5" />
      </svg>
      {title}
    </button>
    {gear && (
      <button aria-label="More options" className="ml-auto">
        <svg className="size-3" viewBox="0 0 12 12" fill="#ccc" stroke="#777" aria-hidden="true">
          <circle cx="6" cy="6" r="5" strokeDasharray="2 1" />
          <circle cx="6" cy="6" r="1.500" />
        </svg>
      </button>
    )}
  </div>
);

const controlBox = "h-[34px] w-full rounded-md border border-[#c8c8c8] bg-white pb-0.5 text-[14px]";

const SelectRow = ({ id, label, value }: { id: string; label: string; value: string }) => (
  <>
    <label htmlFor={id} className="pb-0.5 text-right">{label}</label>
    <div className="relative">
      <select id={id} className={`${controlBox} appearance-none pl-[11px]`}>
        <option>{value}</option>
      </select>
      <svg className="pointer-events-none absolute top-3.5 right-3 h-1.5 w-2.5" viewBox="0 0 10 6" fill="none" stroke="#4d4d4d" strokeWidth="1.200" aria-hidden="true">
        <path d="M.5 .5L5 5 9.500 .5" />
      </svg>
    </div>
  </>
);

const Check = ({ label }: { label: string }) => {
  const [on, setOn] = useState(true);
  return (
    <label className="col-start-2 flex h-[22px] items-center gap-1 pl-1 whitespace-nowrap">
      <span className="grid size-4 shrink-0">
        <input type="checkbox" checked={on} onChange={() => setOn(!on)} className="col-start-1 row-start-1 size-4 appearance-none rounded-[3px] border border-[#c8c8c8] bg-white checked:border-[#e95420] checked:bg-[#e95420]" />
        <svg className="pointer-events-none col-start-1 row-start-1 size-4" viewBox="0 0 16 16" fill="none" stroke="#fff" strokeWidth="2" aria-hidden="true">
          <path d="M3.500 7.500l3.500 3.500 6-6" />
        </svg>
      </span>
      <span className="pb-0.5">{label}</span>
    </label>
  );
};

type Box = [number, number, number, number];
const T: Box = [6, 7, 52, 8];
const layouts: { name: string; p: Box[]; g: Box[]; over?: Box[] }[] = [
  { name: "Blank Slide", p: [], g: [] },
  { name: "Title Slide", p: [T], g: [[6, 20, 52, 24]], over: [[10, 24, 44, 5]] },
  { name: "Title, Content", p: [T], g: [[6, 20, 52, 24]] },
  { name: "Title and 2 Content", p: [T], g: [[6, 20, 24, 24], [34, 20, 24, 24]] },
  { name: "Title Only", p: [T], g: [] },
  { name: "Centered Text", p: [], g: [[6, 7, 52, 37]], over: [[10, 19, 44, 5], [14, 28, 36, 5]] },
  { name: "Title, 2 Content and Content", p: [T], g: [[6, 20, 24, 10], [6, 34, 24, 10], [34, 20, 24, 24]] },
  { name: "Title, Content and 2 Content", p: [T], g: [[6, 20, 24, 24], [34, 20, 24, 10], [34, 34, 24, 10]] },
  { name: "Title, 2 Content over Content", p: [T], g: [[6, 20, 52, 10], [6, 34, 24, 10], [34, 34, 24, 10]] },
  { name: "Title, Content over Content", p: [T], g: [[6, 20, 52, 10], [6, 34, 52, 10]] },
  { name: "Title, 4 Content", p: [T], g: [[6, 20, 24, 10], [34, 20, 24, 10], [6, 34, 24, 10], [34, 34, 24, 10]] },
  { name: "Title, 6 Content", p: [T], g: [[6, 20, 14, 10], [25, 20, 14, 10], [44, 20, 14, 10], [6, 34, 14, 10], [25, 34, 14, 10], [44, 34, 14, 10]] },
];

const Rects = ({ list, fill }: { list: Box[]; fill: string }) => (
  <>
    {list.map(([x, y, w, h], n) => (
      <rect key={n} x={x} y={y} width={w} height={h} rx="2.500" fill={fill} />
    ))}
  </>
);

const Sidebar = () => (
  <aside aria-label="Properties" className="w-[460px] shrink-0 pl-2 text-[14px]">
    <div className="flex h-[26px] items-center pr-1.5 pl-px">
      <svg className="h-[14px] w-2" viewBox="0 0 8 14" fill="#777" aria-hidden="true">
        <path d="M0 0h2v2H0zM6 0h2v2H6zM0 5h2v2H0zM6 5h2v2H6zM0 10h2v2H0zM6 10h2v2H6z" />
      </svg>
      <h2 className="ml-[7px] font-bold">Properties</h2>
      <button aria-label="Close sidebar deck" className="ml-auto pt-0.5">
        <svg className="size-2.5" viewBox="0 0 10 10" stroke="#3d3d3d" strokeWidth="1.200" aria-hidden="true">
          <path d="M1 1l8 8M9 1L1 9" />
        </svg>
      </button>
    </div>
    <SectionHead title="Slide" gear />
    <div className="grid grid-cols-[184px_158px] items-center gap-x-[7px] gap-y-[3px] pt-1.5 pb-[7px]">
      <SelectRow id="format" label="Format:" value={"On-scr… \u00a0\u00a0w (16:9)"} />
      <SelectRow id="orientation" label="Orientation:" value="Landscape" />
      <SelectRow id="background" label="Background:" value="None" />
      <button className={`${controlBox} col-start-2`}>Insert Image...</button>
      <SelectRow id="master" label="Master Slide:" value="TITLE_A… _BODY" />
      <Check label="Master Background" />
      <Check label="Master Objects" />
      <button className={`${controlBox} col-start-2`}>Master View</button>
    </div>
    <SectionHead title="Layouts" />
    <div className="grid grid-cols-4">
      {layouts.map((l, n) => (
        <button key={l.name} aria-label={l.name} className={`flex h-[66px] items-center justify-center border pr-px ${n === 2 ? "border-[#e95420]" : "border-transparent"}`}>
          <svg className="h-[52px] w-16" viewBox="0 0 64 52" aria-hidden="true">
            <rect x=".5" y=".5" width="63" height="50.500" rx="8.500" fill="#e6e6e6" stroke="#8f8f8f" />
            <Rects list={l.p} fill="#8e5bdb" />
            <Rects list={l.g} fill="#808080" />
            <Rects list={l.over ?? []} fill="#8e5bdb" />
          </svg>
        </button>
      ))}
    </div>
  </aside>
);

const tabs: [string, ReactNode][] = [
  ["Properties", ic.props],
  ["Styles", ic.styles],
  ["Gallery", ic.gallery],
  ["Navigator", ic.compass],
  ["Shapes", ic.diamond],
  ["Slide Transition", ic.startNext],
  ["Animation", ic.filmDark],
  ["Master Slides", ic.master],
];

const TabBar = () => (
  <nav aria-label="Sidebar decks" className="flex w-[50px] shrink-0 flex-col items-start gap-2 pt-0.5 pl-1">
    <button aria-label="Sidebar settings" className="mb-1 flex h-[33px] w-9 items-center justify-center">{ic.menu}</button>
    {tabs.map(([name, icon], n) => (
      <button key={name} aria-label={name} className={`flex h-[34px] w-9 items-center justify-center rounded-md border ${n === 0 ? "border-[#c4c4c4] bg-[#d6d6d6]" : "border-transparent"}`}>
        {icon}
      </button>
    ))}
  </nav>
);

/* ------------------------------------------------------------------ */
/* Window frame                                                        */
/* ------------------------------------------------------------------ */

const winBtn = "flex size-[22px] items-center justify-center rounded-full bg-[#dcdcdc]";

const TitleBar = () => (
  <div className="grid h-[37px] shrink-0 grid-cols-[1fr_auto_1fr] items-center border-b border-[#b8b8b8] bg-[#ebebeb]">
    <h1 className="col-start-2 text-[14px] font-bold">saa-format-guide.pptx - LibreOffice Impress</h1>
    <div className="flex gap-3 justify-self-end pr-[7px]">
      <button aria-label="Minimize" className={winBtn}>
        <svg className="size-2.5" viewBox="0 0 10 10" stroke="#333" aria-hidden="true"><path d="M1 7.500h8" /></svg>
      </button>
      <button aria-label="Restore" className={winBtn}>
        <svg className="size-2.5" viewBox="0 0 10 10" fill="none" stroke="#333" aria-hidden="true">
          <path d="M3 1.500h5.500V7" stroke="#888" />
          <rect x="1.500" y="3.500" width="5" height="5" strokeWidth="1.200" />
        </svg>
      </button>
      <button aria-label="Close" className={winBtn}>
        <svg className="size-2.5" viewBox="0 0 10 10" stroke="#333" strokeWidth="1.400" aria-hidden="true"><path d="M1 1l8 8M9 1L1 9" /></svg>
      </button>
    </div>
  </div>
);

const menus = ["File", "Edit", "View", "Insert", "Format", "Slide", "Slide Show", "Tools", "Window", "Help"];

const MenuBar = () => (
  <div className="flex h-[25px] shrink-0">
    <nav aria-label="Menu" className="flex flex-1 items-center gap-[17px] border-b border-[#dcdcdc] pl-[9px] text-[14px]">
      {menus.map((m) => (
        <button key={m}>{m}</button>
      ))}
    </nav>
    <button aria-label="Close document" className="w-6 pl-[3px]">
      <svg className="size-2.5" viewBox="0 0 10 10" stroke="#3d3d3d" strokeWidth="1.200" aria-hidden="true"><path d="M1 1l8 8M9 1L1 9" /></svg>
    </button>
  </div>
);

const cell = "flex h-3.5 items-center border-[#d4d4d4]";

const StatusBar = () => (
  <footer className="flex h-[21px] shrink-0 items-center border-t border-[#b5b5b5] text-[13px] leading-3.5 whitespace-nowrap">
    <span className={`${cell} w-[83px] border-r pl-2.5`}>Slide 1 of 15</span>
    <span className={`${cell} flex-[496] border-r`} />
    <span className={`${cell} flex-[403] border-r pl-2`}>TITLE_AND_BODY</span>
    <span className={`${cell} w-[217px] border-r pl-2.5`}>
      <svg className="mr-[5px] h-3 w-[15px]" viewBox="0 0 15 12" fill="none" aria-hidden="true">
        <path d="M5 3.500h9.500v7H2.500V6" stroke="#4d4d4d" />
        <path d="M0 2.500h5M2.500 0v5" stroke="#e95420" />
      </svg>
      <span className="w-[84px]">-0.38 / -3.09</span>
      <svg className="mr-1 h-3 w-4" viewBox="0 0 16 12" fill="none" aria-hidden="true">
        <rect x="3.500" y="4.500" width="12" height="6.500" stroke="#4d4d4d" />
        <path d="M3 1.500h12M3.500 0v3M15.500 0v3M.5 4v7" stroke="#e95420" />
      </svg>
      0.00 x 0.00
    </span>
    <span className={`${cell} w-[22px] justify-center border-r`}>
      <svg className="h-3 w-2.5" viewBox="0 0 10 12" aria-hidden="true">
        <path d="M3.500 .5h3v4h2.500L5 9.500 1 4.500h2.500z" fill="#9bd237" stroke="#4d6b1b" />
        <path d="M1 11.500h8" stroke="#4d4d4d" />
      </svg>
    </span>
    <span className={`${cell} w-[29px] border-r`} />
    <span className={`${cell} flex-[376] justify-center border-r`}>English {"{en}"}</span>
    <span className={`${cell} w-[23px] justify-center border-r`}>
      <svg className="size-3.5" viewBox="0 0 14 14" fill="#e95420" aria-hidden="true">
        <path d="M7 0l3 3H4zM7 14l3-3H4zM0 7l3-3v6zM14 7l-3-3v6zM6.500 2h1v10h-1zM2 6.500h10v1H2z" />
      </svg>
    </span>
    <span className={`${cell} w-[142px] gap-1.5 border-r pl-2.5`}>
      <button aria-label="Zoom out" className="w-2">
        <svg className="size-2" viewBox="0 0 8 8" stroke="#5a5a5a" strokeWidth="2" aria-hidden="true"><path d="M0 4h8" /></svg>
      </button>
      <input
        type="range"
        aria-label="Zoom"
        defaultValue="50"
        className="h-3 w-24 appearance-none bg-transparent [&::-webkit-slider-runnable-track]:h-0.5 [&::-webkit-slider-runnable-track]:bg-[#989898] [&::-webkit-slider-thumb]:-mt-[3px] [&::-webkit-slider-thumb]:size-2 [&::-webkit-slider-thumb]:appearance-none [&::-webkit-slider-thumb]:rounded-full [&::-webkit-slider-thumb]:border [&::-webkit-slider-thumb]:border-[#555] [&::-webkit-slider-thumb]:bg-white"
      />
      <button aria-label="Zoom in" className="w-2">
        <svg className="size-2" viewBox="0 0 8 8" stroke="#5a5a5a" strokeWidth="2" aria-hidden="true"><path d="M0 4h8M4 0v8" /></svg>
      </button>
    </span>
    <span className="w-12 pl-2">113%</span>
  </footer>
);

export default function App() {
  return (
    <div className="flex h-screen min-h-[720px] flex-col overflow-hidden font-['Noto_Sans',sans-serif] text-[#3d3d3d]">
      <TopBar />
      <div className="flex min-h-0 flex-1">
        <Dock />
        <div className="flex min-w-0 flex-1 flex-col bg-[#fafafa]">
          <TitleBar />
          <MenuBar />
          <Toolbar name="Standard" tools={row1} pad="pl-0.5" />
          <Toolbar name="Drawing" tools={row2} pad="pl-1" />
          <div className="flex min-h-0 flex-1">
            <SlidesPanel />
            <Canvas />
            <Sidebar />
            <TabBar />
          </div>
          <StatusBar />
        </div>
      </div>
      <svg className="pointer-events-none absolute top-[975px] left-[1732px] h-[26px] w-[18px]" viewBox="0 0 18 26" aria-hidden="true">
        <path d="M1 1v21l4.500-4.500L9 25l3.500-1.500L9.500 16H16z" fill="#2b2b2b" stroke="#fff" strokeWidth="1.300" />
      </svg>
    </div>
  );
}
